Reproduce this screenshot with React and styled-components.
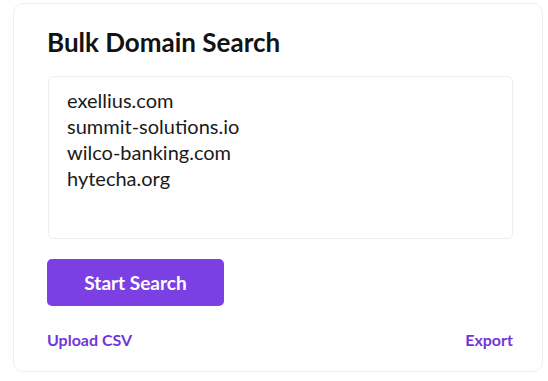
import React from "react";
import styled, { createGlobalStyle } from "styled-components";

const Global = createGlobalStyle`
  html, body { margin: 0; padding: 0; background: #ffffff; }
  body { font-family: "Lato", "Noto Sans", sans-serif; }
`;

const Page = styled.div`
  padding: 3px 5px 0 13px;
`;

const Card = styled.div`
  box-sizing: border-box;
  width: 530px;
  height: 369px;
  border: 1px solid #f0f0f0;
  border-radius: 10px;
  padding: 22px 29px 0 33px;
  display: flex;
  flex-direction: column;
`;

const Title = styled.h1`
  margin: 0;
  font-size: 26px;
  font-weight: 700;
  color: #121212;
  line-height: 32px;
`;

const DomainBox = styled.div`
  box-sizing: border-box;
  margin-top: 18px;
  margin-left: 1px;
  height: 163px;
  border: 1px solid #eeeeee;
  border-radius: 6px;
  padding: 10px 18px;
  display: flex;
  flex-direction: column;
`;

const Domain = styled.div`
  font-size: 20px;
  line-height: 26px;
  color: #1a1a1a;
`;

const Button = styled.button`
  margin-top: 20px;
  width: 177px;
  height: 47px;
  border: none;
  border-radius: 5px;
  background: #7b3fe4;
  color: #ffffff;
  font-family: inherit;
  font-size: 19px;
  font-weight: 700;
  cursor: pointer;
`;

const Footer = styled.div`
  margin-top: 24px;
  display: flex;
  justify-content: space-between;
`;

const Link = styled.a`
  font-size: 16px;
  font-weight: 700;
  color: #7236d8;
  text-decoration: none;
`;

const domains = [
  "exellius.com",
  "summit-solutions.io",
  "wilco-banking.com",
  "hytecha.org",
];

export default function App() {
  return (
    <>
      <Global />
      <Page>
        <Card>
          <Title>Bulk Domain Search</Title>
          <DomainBox>
            {domains.map((d) => (
              <Domain key={d}>{d}</Domain>
            ))}
          </DomainBox>
          <Button>Start Search</Button>
          <Footer>
            <Link href="#">Upload CSV</Link>
            <Link href="#">Export</Link>
          </Footer>
        </Card>
      </Page>
    </>
  );
}
